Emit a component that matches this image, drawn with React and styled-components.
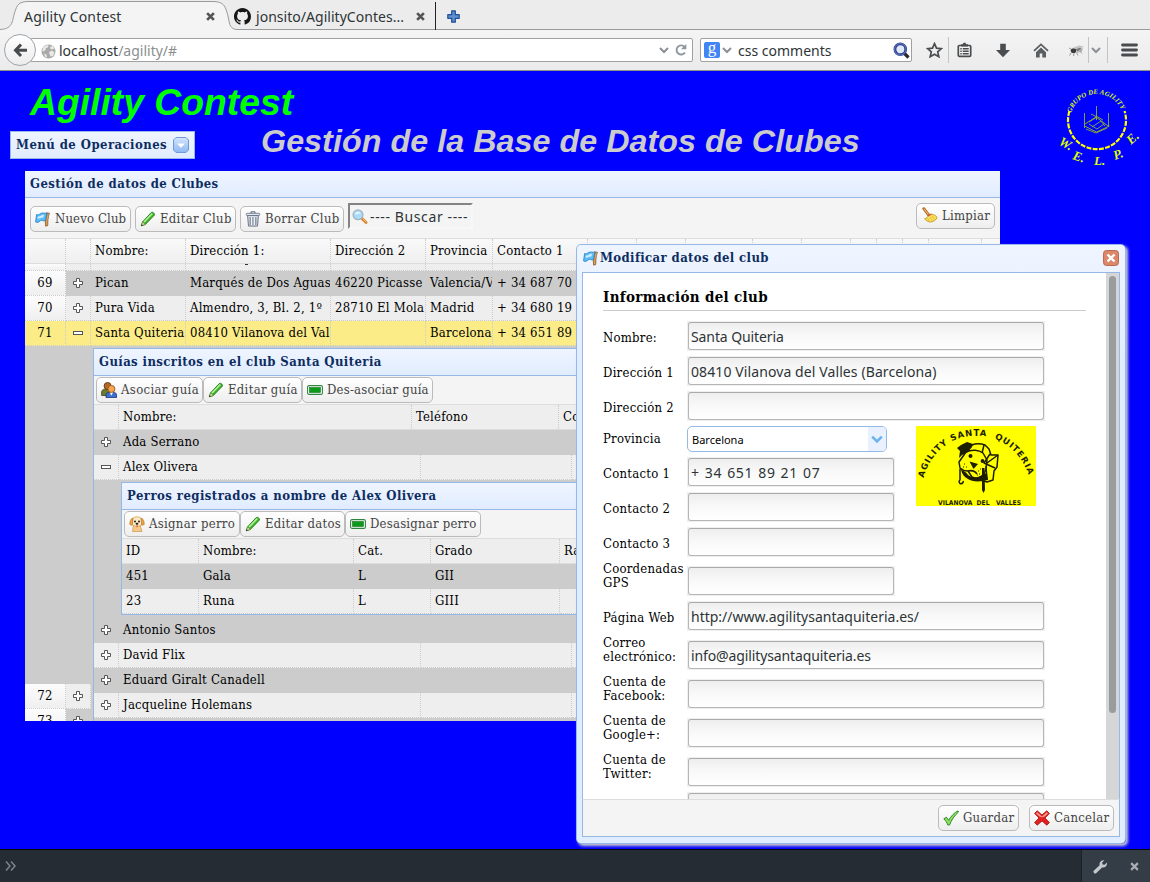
import React from 'react';
import styled, { createGlobalStyle, css } from 'styled-components';

const serif = '"DejaVu Serif Condensed", "DejaVu Serif", serif';
const ui = '"Noto Sans", "Open Sans", sans-serif';
const navy = '#0e2d5f';
const line = '#95b8e7';

const GlobalStyle = createGlobalStyle`
  * { box-sizing: border-box; }
  body { margin: 0; background: #00f; overflow: hidden; }
  svg { display: block; flex: none; }
`;

const Page = styled.div`
  width: 1150px;
  height: 882px;
  display: flex;
  flex-direction: column;
  position: relative;
  overflow: hidden;
  background: #00f;
  font: 13px/16px ${serif};
  letter-spacing: 0.2px;
  color: #000;
`;

/* ---------- browser chrome ---------- */

const TabStrip = styled.div`
  position: relative;
  height: 30px;
  flex: none;
  display: flex;
  align-items: center;
  background: #ececec;
  font: 14px/20px ${ui};
  letter-spacing: 0.1px;
  color: #2e3436;
`;
const TabShape = styled.svg`
  position: absolute;
  left: 0;
  top: 0;
`;
const Tab = styled.div`
  position: relative;
  width: ${p => p.$w}px;
  height: 30px;
  display: flex;
  align-items: center;
  padding: 3px 11px 0 ${p => p.$pad}px;
  gap: 5px;
`;
const TabTitle = styled.span`
  flex: 1;
  white-space: nowrap;
  letter-spacing: ${p => p.$ls || 0}px;
`;
const PlusTab = styled.div`
  position: relative;
  padding: 2px 0 0 11px;
`;
const NavBar = styled.div`
  height: 41px;
  flex: none;
  display: flex;
  align-items: center;
  position: relative;
  background: linear-gradient(#f4f4f4, #ebebeb);
  border-bottom: 1px solid #8f8f8f;
  padding: 0 0 0 4px;
  font: 14px/20px ${ui};
  letter-spacing: 0;
  color: #2e3436;
`;
const BackButton = styled.div`
  width: 32px;
  height: 32px;
  border: 1px solid #9ca4ab;
  border-radius: 50%;
  background: linear-gradient(#fff, #ececec);
  display: flex;
  align-items: center;
  justify-content: center;
  z-index: 1;
`;
const UrlBar = styled.div`
  width: 663px;
  height: 24px;
  margin-left: -6px;
  padding: 2px 4px 0 10px;
  display: flex;
  align-items: center;
  border: 1px solid #a1a1a1;
  border-radius: 2px;
  background: #fff;
`;
const Url = styled.span`
  flex: 1;
  padding-left: 3px;
  line-height: 20px;
  span { color: #8b8e8f; }
`;
const UrlButtons = styled.div`
  display: flex;
  align-items: center;
  gap: 5px;
  margin-top: -3px;
`;
const SearchBox = styled.div`
  width: 212px;
  height: 24px;
  margin: 0 9px 0 7px;
  padding: 0 1px 0 3px;
  display: flex;
  align-items: center;
  border: 1px solid #a1a1a1;
  border-radius: 2px;
  background: #fff;
`;
const SearchText = styled.span`
  flex: 1;
  padding: 2px 0 0 6px;
`;
const GoogleBadge = styled.div`
  width: 16px;
  height: 16px;
  border-radius: 2px;
  background: #4285f4;
  color: #fff;
  font: 17px/11px "Liberation Serif", serif;
  text-align: center;
  margin-right: 2px;
`;
const ToolIcon = styled.div`
  width: ${p => p.$w}px;
  height: ${p => (p.$sep ? 26 : 20)}px;
  display: flex;
  align-items: center;
  justify-content: center;
  padding: 0 ${p => p.$pr || 0}px 0 ${p => p.$pl || 0}px;
  border-left: ${p => (p.$sep ? '1px solid #c0c4c8' : 'none')};
`;

/* ---------- page heading ---------- */

const Heading = styled.header`
  height: 100px;
  flex: none;
  display: flex;
  padding: 0 2px 0 10px;
`;
const HeadLeft = styled.div`
  width: 1048px;
  display: flex;
  flex-direction: column;
`;
const Brand = styled.h1`
  margin: 11px 0 0 20px;
  font: italic bold 37.3px/40px "Liberation Sans", sans-serif;
  letter-spacing: 0;
  color: #0f0;
`;
const SubRow = styled.div`
  display: flex;
  align-items: flex-start;
`;
const SubTitle = styled.h2`
  margin: 1px 0 0 66px;
  font: italic bold 32.26px/36px "Liberation Sans", sans-serif;
  letter-spacing: 0.05px;
  color: #ccc;
  white-space: nowrap;
`;
const MenuButton = styled.div`
  width: 185px;
  height: 28px;
  margin-top: 9px;
  padding: 0 5px;
  display: flex;
  align-items: center;
  justify-content: space-between;
  border: 1px solid ${line};
  background: linear-gradient(#eff5ff, #e0ecff);
  font-weight: bold;
  letter-spacing: 0.45px;
  color: ${navy};
  white-space: nowrap;
`;

/* ---------- panels and grids ---------- */

const Panel = styled.section`
  display: flex;
  flex-direction: column;
  ${p => p.$nested && css`border: 1px solid ${line};`}
`;
const MainPanel = styled(Panel)`
  width: 975px;
  height: 550px;
  margin-left: 25px;
  flex: none;
  overflow: hidden;
  background: #fff;
`;
const PanelTitle = styled.div`
  height: 27px;
  flex: none;
  padding: 5px 5px 0;
  font-weight: bold;
  letter-spacing: ${p => p.$ls || 0.42}px;
  color: ${navy};
  white-space: nowrap;
  background: linear-gradient(#eff5ff, #e0ecff);
  border-bottom: 1px solid ${line};
`;
const ToolBar = styled.div`
  height: ${p => (p.$big ? 41 : 29)}px;
  flex: none;
  display: flex;
  align-items: center;
  gap: ${p => (p.$big ? 4 : 0)}px;
  padding: ${p => (p.$big ? '2px 5px 0' : '0 2px')};
  background: #f4f4f4;
  border-bottom: 1px solid #ddd;
`;
const Button = styled.div`
  width: ${p => p.$w}px;
  height: 26px;
  flex: none;
  display: flex;
  align-items: center;
  gap: 4px;
  margin-top: ${p => p.$lift || 0}px;
  padding: 0 0 1px 4px;
  border: 1px solid #bbb;
  border-radius: 5px;
  background: linear-gradient(#fff, #eee);
  color: #444;
  white-space: nowrap;
  letter-spacing: ${p => (p.$ls === undefined ? 0.25 : p.$ls)}px;
`;
const Spacer = styled.div`flex: 1;`;
const SearchInput = styled.div`
  width: 125px;
  height: 26px;
  margin-top: -6px;
  padding: 2px 0 0 2px;
  display: flex;
  align-items: center;
  gap: 2px;
  border: 2px solid;
  border-color: #848484 #f8f8f8 #f8f8f8 #848484;
  font: 14px/20px ${ui};
  letter-spacing: 0.62px;
  color: #2e3436;
  white-space: nowrap;
`;
const Row = styled.div`
  height: 25px;
  flex: none;
  display: flex;
  background: ${p => (p.$selected ? '#fbec88' : p.$alt ? '#ccc' : '#eee')};
`;
const HeadRow = styled(Row)`
  background: ${p => (p.$plain ? '#eee' : 'linear-gradient(#f9f9f9, #efefef)')};
  border-bottom: 1px solid #ddd;
`;
const Cell = styled.div`
  width: ${p => p.$w}px;
  flex: none;
  padding: 4px 0 0 ${p => (p.$center ? 0 : 4)}px;
  border-right: 1px dotted #ccc;
  border-bottom: ${p => (p.$head ? 'none' : '1px dotted #ccc')};
  white-space: nowrap;
  overflow: hidden;
  ${p => p.$center && css`
    display: flex;
    justify-content: center;
  `}
  ${p => p.$num && css`background: linear-gradient(#fcfcfc, #efefef);`}
`;
const GridBody = styled.div`
  flex: 1;
  overflow: hidden;
  display: flex;
  flex-direction: column;
  background: #ccc;
`;
const SliverRow = styled(Row)`
  height: 7px;
  overflow: hidden;
`;
const Descender = styled.div`
  width: 3px;
  height: 1px;
  margin: -4px 0 0 55px;
  background: #333;
`;
const SplitView = styled.div`
  flex: none;
  display: flex;
`;
const LockedPane = styled.div`
  width: 66px;
  padding-top: 338px;
`;
const DetailPane = styled.div`
  padding: 2px 0 0 2px;
`;
const SubDetail = styled.div`
  padding: 2px 0 3px 27px;
  background: #ccc;
`;
const NestedPanel = styled(Panel)`
  width: ${p => p.$w}px;
`;

/* ---------- dialog ---------- */

const Dialog = styled.div`
  position: absolute;
  left: 576px;
  top: 244px;
  width: 550px;
  height: 600px;
  display: flex;
  flex-direction: column;
  padding: 0 6px 6px;
  border: 1px solid ${line};
  border-radius: 5px;
  background: linear-gradient(#eff5ff, #e0ecff 20%);
  box-shadow: 2px 2px 3px #ccc;
`;
const DialogTitle = styled.div`
  height: 27px;
  flex: none;
  display: flex;
  align-items: center;
  gap: 1px;
  font-weight: bold;
  letter-spacing: 0.38px;
  color: ${navy};
  padding: 0 0 1px;
`;
const DialogBody = styled.div`
  height: 527px;
  flex: none;
  display: flex;
  border: 1px solid ${line};
  border-bottom: none;
  background: #fff;
  margin: 0 -1px;
`;
const FormArea = styled.div`
  flex: 1;
  height: 526px;
  overflow: hidden;
  padding: 16px 20px 0;
`;
const ScrollTrack = styled.div`
  width: 13px;
  padding: 3px 3px 0;
  background: #d6d6d6;
`;
const ScrollThumb = styled.div`
  height: 437px;
  border-radius: 4px;
  background: #999c9d;
`;
const FormTitle = styled.div`
  height: 22px;
  margin-bottom: 10px;
  border-bottom: 1px solid #ccc;
  font-size: 15px;
  line-height: 17px;
  font-weight: bold;
  letter-spacing: 0.33px;
`;
const Field = styled.div`
  min-height: ${p => (p.$combo ? 26 : 30)}px;
  display: flex;
  align-items: flex-end;
  margin-bottom: 5px;
  ${p => p.$two && css`height: 34px;`}
`;
const Label = styled.label`
  width: 84px;
  flex: none;
  line-height: 14px;
  padding-bottom: 6px;
  letter-spacing: 0.25px;
  white-space: nowrap;
`;
const InputFrame = styled.div`
  width: ${p => p.$w}px;
  height: 30px;
  flex: none;
  padding: 1px;
  background: #efefef;
`;
const Input = styled.div`
  height: 28px;
  padding: 4px 0 0 2px;
  border: 1px solid #b6b6b6;
  border-top-color: #aaa;
  border-radius: 3px;
  background: linear-gradient(#eee, #f8f8f8 45%, #fff);
  font: 14px/20px ${ui};
  letter-spacing: ${p => p.$ls || 0}px;
  word-spacing: ${p => p.$ws || 0}px;
  color: #2e3436;
  white-space: pre;
`;
const Combo = styled.div`
  width: 200px;
  height: 26px;
  display: flex;
  border: 1px solid ${line};
  border-radius: 5px;
  overflow: hidden;
  background: #fff;
  font: 11px/25px ${ui};
  letter-spacing: 0;
  padding-left: 4px;
`;
const ComboArrow = styled.div`
  width: 18px;
  margin-left: auto;
  display: flex;
  align-items: center;
  justify-content: center;
  background: #e9f1ff;
`;
const LogoRow = styled.div`
  display: flex;
  gap: 21px;
`;
const DialogFooter = styled.div`
  height: 38px;
  flex: none;
  margin: 0 -1px;
  display: flex;
  align-items: center;
  justify-content: flex-end;
  gap: 10px;
  padding: 0 5px 0 0;
  border: 1px solid ${line};
  border-top-color: #ddd;
  background: #f4f4f4;
`;

/* ---------- developer bar ---------- */

const BlueGap = styled.div`flex: 1;`;
const DevBar = styled.footer`
  height: 33px;
  flex: none;
  display: flex;
  align-items: center;
  justify-content: space-between;
  border-top: 1px solid #06080a;
  background: #252c33;
  padding-left: 5px;
`;
const DevTools = styled.div`
  width: 69px;
  height: 32px;
  display: flex;
  align-items: center;
  gap: 22px;
  padding-left: 11px;
  border-left: 1px solid #1a2026;
  background: #343c45;
`;

/* ---------- icons ---------- */

const Cross = ({ size = 8, color = '#555', w = 2.4 }) => (
  <svg width={size} height={size} viewBox="0 0 8 8">
    <path d="M1 1l6 6M7 1L1 7" stroke={color} strokeWidth={w} />
  </svg>
);
const Chevron = ({ color = '#8c9094', s = 10, w = 2 }) => (
  <svg width={s} height={s} viewBox="0 0 10 10">
    <path d="M1 3l4 4 4-4" fill="none" stroke={color} strokeWidth={w} />
  </svg>
);
const ExpanderSvg = styled.svg`
  margin-top: 2px;
`;
const Expander = ({ open }) => (
  <ExpanderSvg width="12" height="12" viewBox="0 0 12 12">
    {open
      ? <rect x="1.5" y="4.5" width="9" height="3" fill="#fff" stroke="#555" />
      : <path d="M4.5 1.5h3v3h3v3h-3v3h-3v-3h-3v-3h3z" fill="#fff" stroke="#555" />}
  </ExpanderSvg>
);
const FlagIcon = () => (
  <svg width="16" height="16" viewBox="0 0 16 16">
    <path d="M11.300 1.800l3.200.4c-.8 2-1.300 4.200-1.500 6.600l-.2 5.800-2.200.6-.4-5.200z" fill="#b5762c" stroke="#7a4a15" strokeWidth=".6" />
    <path d="M13.300 2.600l-1.400 6.400-.2 5.200" stroke="#e8b46a" strokeWidth=".9" fill="none" />
    <path d="M1.600 3.600C3.600 5 5.600 1.500 8.200 2c1.500.3 2.500.4 3.700 0L10.400 9.600c-2 .8-3.500-.9-5.200.2C3.800 11.200 2 12 .6 11z" fill="#5dbdf7" stroke="#2a86cf" strokeWidth=".9" />
    <path d="M3 5.500c2 .6 3.500-2.200 6-1.800L8.300 6.500c-2-.3-3.500 1.200-5.800 1.300z" fill="#d3efff" />
  </svg>
);
const PencilIcon = () => (
  <svg width="16" height="16" viewBox="0 0 16 16">
    <path d="M1.300 14.800l1.300-4L11.300 1.500c1.300-1 3.900 1.200 2.900 2.800L5.300 13.500z" fill="#3fb52c" stroke="#1f7a18" strokeWidth=".9" />
    <path d="M4 11L12.300 2.500" stroke="#b8f29b" strokeWidth="1.600" />
    <path d="M1.300 14.800l1.300-4 2.700 2.700z" fill="#f0d9a8" stroke="#3c6d2b" strokeWidth=".5" />
    <path d="M1.200 14.900l.5-1.700 1.200 1.100z" fill="#222" />
  </svg>
);
const TrashIcon = () => (
  <svg width="16" height="16" viewBox="0 0 16 16">
    <path d="M2.600 4.500h10.800l-.9 10.600H3.500z" fill="#d8dee6" stroke="#5d6a7c" strokeWidth=".9" />
    <path d="M5.200 6v8M8 6v8M10.800 6v8" stroke="#7c899b" strokeWidth="1.200" />
    <path d="M6.500 6v8M9.300 6v8" stroke="#f6f8fa" strokeWidth=".8" />
    <rect x="1.300" y="2.300" width="13.400" height="2.200" rx=".8" fill="#e4e9ef" stroke="#5d6a7c" strokeWidth=".8" />
    <path d="M6 2.200V.8h4v1.400" fill="none" stroke="#5d6a7c" />
  </svg>
);
const LensIcon = () => (
  <svg width="16" height="16" viewBox="0 0 16 16">
    <path d="M10 9.600l4 4" stroke="#d9822b" strokeWidth="2.800" strokeLinecap="round" />
    <path d="M10.500 9.600l3.400 3.400" stroke="#ffc46b" strokeWidth="1" />
    <circle cx="6" cy="5.800" r="4.900" fill="#a9dbfb" stroke="#a7b1bb" strokeWidth="1.300" />
    <path d="M3 5.500a3 3 0 0 1 5.500-1.200C7 5 5 5 3 5.500z" fill="#eaf8ff" />
  </svg>
);
const BroomIcon = () => (
  <svg width="17" height="17" viewBox="0 0 18 18">
    <path d="M3 1.800l5 6.500" stroke="#a8641d" strokeWidth="3" strokeLinecap="round" />
    <path d="M3 1.800l4.700 6" stroke="#f1b45e" strokeWidth="1.300" />
    <path d="M8.500 7.800c3-.8 7 .4 8.500 3.200-.4 2.600-3.700 4.700-7.500 5C7 15.500 5 13.800 3.800 12.600 6 12 7.500 10.500 8.500 7.800z" fill="#fbe05e" stroke="#b88a14" strokeWidth=".8" />
    <path d="M7 11.800l1.800 3.400M9.500 10.500l2.700 4M11.500 9.300l3 3.500" stroke="#d0a52a" strokeWidth=".7" />
    <path d="M7.200 9.600l3.700-2" stroke="#d64a3a" strokeWidth="1.300" />
  </svg>
);
const PeopleIcon = () => (
  <svg width="16" height="16" viewBox="0 0 16 16">
    <path d="M.6 13.500V10c0-2 2-2.800 4-2.800h3.500v6.300z" fill="#6b7a2c" stroke="#3c461a" strokeWidth=".8" />
    <circle cx="6.600" cy="4" r="3.500" fill="#b06a2a" stroke="#5d3411" strokeWidth=".9" />
    <path d="M5 15.600V13c0-2 2-2.800 4-2.800h3c2 0 3.500 1 3.500 3v2.400z" fill="#3b6fd0" stroke="#27397c" strokeWidth=".9" />
    <path d="M8.800 10.300l1.600 3.400 1.700-3.400z" fill="#fff" />
    <circle cx="10.400" cy="6.900" r="3.500" fill="#f6a650" stroke="#a3561a" strokeWidth=".9" />
  </svg>
);
const UnlinkIcon = () => (
  <svg width="16" height="16" viewBox="0 0 16 16">
    <rect x=".6" y="3.600" width="14.800" height="8.800" rx="1.500" fill="#fff" stroke="#2e8540" strokeWidth="1.100" />
    <rect x="2.600" y="5.600" width="10.800" height="4.800" fill="#0c9a1a" stroke="#0a6b12" strokeWidth=".6" />
  </svg>
);
const DogIcon = () => (
  <svg width="16" height="16" viewBox="0 0 16 16">
    <path d="M4.500 9h6.500l2 6.500H3.500z" fill="#f6c98b" stroke="#c98a3c" strokeWidth=".6" />
    <path d="M3.800 2.500C5.500.3 10.500.3 12.200 2.500L13 8c-1.500 3-8.500 3-10 0z" fill="#fde9c6" stroke="#d49a4e" strokeWidth=".7" />
    <path d="M4 2C1.800 2.500.6 5.500.8 8.500l2.400.8zM12 2c2.200.5 3.400 3.500 3.200 6.500l-2.400.8z" fill="#eca24a" stroke="#b9711f" strokeWidth=".6" />
    <circle cx="6" cy="5.500" r="1" fill="#222" /><circle cx="10" cy="5.500" r="1" fill="#222" />
    <ellipse cx="8" cy="7.800" rx="1.400" ry="1" fill="#1c1c1c" />
    <path d="M7 9.600h2l-1 2.200z" fill="#d9532c" />
  </svg>
);
const CheckIcon = () => (
  <svg width="16" height="16" viewBox="0 0 16 16">
    <path d="M.8 8.800l2.600-1.600 2.300 3.200C8 6 11.500 2.500 15 .9l.4 1.200C11.500 5.500 8.500 9.800 6.500 15H4.800C4 12.600 2.600 10.500.8 8.800z" fill="#8fe05e" stroke="#2c8a2a" strokeWidth="1" />
  </svg>
);
const CancelIcon = () => (
  <svg width="16" height="16" viewBox="0 0 16 16">
    <path d="M3.200.8L8 5 12.800.8l2.600 2.600L11 8l4.400 4.600-2.600 2.600L8 11l-4.800 4.200-2.600-2.600L5 8 .6 3.400z" fill="#e3211c" stroke="#a30f0f" strokeWidth=".8" strokeLinejoin="round" />
    <path d="M3.200 2.200L8 6.500l4.800-4.300 1.200 1.200-3.800 3.300c-1.400.6-3 .6-4.400 0L2 3.400z" fill="#ff9a94" />
  </svg>
);
const GithubIcon = () => (
  <svg width="17" height="17" viewBox="0 0 16 16">
    <path fill="#161616" fillRule="evenodd" d="M8 0C3.580 0 0 3.580 0 8c0 3.540 2.290 6.530 5.470 7.590.4.070.55-.17.55-.38 0-.19-.01-.82-.01-1.490-2.010.37-2.530-.49-2.690-.94-.09-.23-.48-.94-.82-1.130-.28-.15-.68-.52-.01-.53.63-.01 1.080.58 1.230.82.72 1.210 1.870.87 2.330.66.070-.52.28-.87.51-1.070-1.780-.2-3.640-.89-3.640-3.950 0-.87.31-1.590.82-2.150-.08-.2-.36-1.020.08-2.120 0 0 .67-.21 2.200.82.64-.18 1.320-.27 2-.27s1.360.09 2 .27c1.530-1.040 2.200-.82 2.200-.82.44 1.100.16 1.920.08 2.120.51.56.82 1.270.82 2.150 0 3.070-1.870 3.750-3.650 3.950.29.25.54.73.54 1.480 0 1.070-.01 1.930-.01 2.200 0 .21.15.46.55.38A8.010 8.010 0 0 0 16 8c0-4.420-3.580-8-8-8z" />
  </svg>
);
const GlobeIcon = () => (
  <svg width="15" height="15" viewBox="0 0 15 15">
    <circle cx="7.500" cy="7.500" r="7" fill="#a9a9a9" />
    <path d="M2 3.500C4 1.500 6 1 7.500 1.500L7 3.500 5 4 4.500 6 2.500 7.500 1.300 7zM9 3l2.500-1 2 2.500-2.300 1L9.500 5zM8 8l3-1.500 2.500 2-1.500 3.500-2.500.5L8.500 10zM3 9.500l2.500 1 .5 3-2-.8z" fill="#e8e8e8" />
  </svg>
);
const BackArrow = () => (
  <svg width="15" height="15" viewBox="0 0 15 15">
    <path d="M8 1.500L2.500 7.300 8 13M3 7.300h11" fill="none" stroke="#474b4d" strokeWidth="3" />
  </svg>
);
const ReloadIcon = () => (
  <svg width="14" height="14" viewBox="0 0 14 14">
    <path d="M10.500 3.800A4.600 4.600 0 1 0 11 9.500" fill="none" stroke="#8e979e" strokeWidth="1.900" />
    <path d="M12.300 1v5.200H7z" fill="#8e979e" />
  </svg>
);
const BigLens = () => (
  <svg width="17" height="17" viewBox="0 0 17 17">
    <path d="M11 11l4.500 4.500" stroke="#2b2b2b" strokeWidth="3.200" />
    <circle cx="7.300" cy="7.300" r="5.400" fill="#dfe9f8" stroke="#2d3f8f" strokeWidth="2.800" />
    <circle cx="7.300" cy="7.300" r="5.700" fill="none" stroke="#7f95d2" strokeWidth=".7" />
  </svg>
);
const StarIcon = () => (
  <svg width="17" height="16" viewBox="0 0 17 16">
    <path d="M8.500 1.600l2 4.500 4.900.5-3.700 3.300 1.100 4.800-4.300-2.500-4.300 2.500 1.100-4.800L1.600 6.600l4.900-.5z" fill="none" stroke="#4a4d50" strokeWidth="1.700" strokeLinejoin="miter" />
  </svg>
);
const ClipIcon = () => (
  <svg width="15" height="16" viewBox="0 0 15 16">
    <rect x="1.300" y="3.500" width="12.400" height="10.800" rx="1" fill="#f4f4f4" stroke="#4a4d50" strokeWidth="1.700" />
    <path d="M4 4.500V2.200h1.800L6.500.8h2l.7 1.400H11v2.300z" fill="#4a4d50" />
    <path d="M3.300 6.700h1.400M5.700 6.700h6M3.300 9.200h1.400M5.700 9.200h6M3.300 11.700h1.400M5.700 11.700h6" stroke="#4a4d50" strokeWidth="1.400" />
  </svg>
);
const DownIcon = () => (
  <svg width="14" height="15" viewBox="0 0 14 15"><path d="M4.200.7h5.600v6.300H14l-7 7.300-7-7.300h4.200z" fill="#4a4d50" /></svg>
);
const HomeIcon = () => (
  <svg width="16" height="15" viewBox="0 0 16 15">
    <path d="M1 7.800l7-6.500 7 6.500" fill="none" stroke="#5b5e60" strokeWidth="1.700" />
    <path d="M3 9.300l5-4.700 5 4.700v5.200H9.300v-4H6.700v4H3z" fill="#5b5e60" />
  </svg>
);
const BugIcon = () => (
  <svg width="17" height="13" viewBox="0 0 17 13">
    <path d="M3 4.500l8-3 5 1-7 4z" fill="#c4c4c4" />
    <path d="M9 6l6-2-1 3.500-5 1.500z" fill="#b5b5b5" />
    <ellipse cx="5.500" cy="6.800" rx="2.800" ry="2.300" fill="#3b3b3b" />
    <path d="M8 5.200l4-1.500 1.500 1.300-4.500 2.200z" fill="#777" />
    <path d="M3 9l-1.500 2.500M6 9l-.5 3M8.500 8.500l1.500 3M3 5L1 4M12 7l2 2.500" stroke="#8a8a8a" strokeWidth=".8" />
  </svg>
);
const MenuLines = () => (
  <svg width="17" height="14" viewBox="0 0 17 14"><path d="M1.500 2h14M1.500 7h14M1.500 12h14" stroke="#474b4d" strokeWidth="2.800" strokeLinecap="round" /></svg>
);
const PlusIcon = () => (
  <svg width="13" height="13" viewBox="0 0 13 13">
    <path d="M4.700.8h3.600v3.900h3.900v3.600H8.300v3.900H4.700V8.300H.8V4.700h3.900z" fill="#5f8fce" stroke="#1f4f96" strokeWidth="1.200" strokeLinejoin="round" />
  </svg>
);
const DropBadge = () => (
  <svg width="16" height="16" viewBox="0 0 16 16">
    <defs><linearGradient id="db" x1="0" y1="0" x2="0" y2="1"><stop offset="0" stopColor="#d4e5fd" /><stop offset="1" stopColor="#8db7ef" /></linearGradient></defs>
    <path d="M3 .5h10L15.500 3v10L13 15.500H3L.5 13V3z" fill="url(#db)" stroke="#6f9bd8" />
    <path d="M4 6.500h8l-4 4.300z" fill="#fff" />
  </svg>
);
const CloseBadge = () => (
  <svg width="16" height="16" viewBox="0 0 16 16">
    <rect x=".5" y=".5" width="15" height="15" rx="3" fill="#dc8769" stroke="#b96b50" />
    <path d="M4.500 4.500l7 7M11.500 4.500l-7 7" stroke="#fff" strokeWidth="2.400" />
  </svg>
);
const WrenchIcon = () => (
  <svg width="15" height="15" viewBox="0 0 15 15">
    <path d="M1 14a1.700 1.700 0 0 1 0-2.400L6.600 6.300C6 3.500 8 .7 11.300 1.200L9.200 3.400l.3 2 2.100.3 2.300-2.200c.6 3.300-2 5.500-4.800 4.900L3.400 14A1.700 1.700 0 0 1 1 14z" fill="#c3c8cc" />
  </svg>
);
const DoubleChevron = () => (
  <svg width="11" height="12" viewBox="0 0 11 12"><path d="M1 1.500L5 6l-4 4.500M6 1.500L10 6l-4 4.500" fill="none" stroke="#7d868e" strokeWidth="1.500" /></svg>
);

const EmblemSvg = styled.svg`
  margin-top: 13px;
`;
const ClubEmblem = () => (
  <EmblemSvg width="90" height="86" viewBox="0 0 90 86">
    <defs><path id="welpeArc" d="M12 37A27 27 0 1 1 66 37" /></defs>
    <g fill="#df0" fontFamily="Liberation Serif, serif" fontStyle="italic" fontWeight="bold">
      <text fontSize="6.800" letterSpacing="0.1"><textPath href="#welpeArc" startOffset="8">GRUPO DE AGILITY</textPath></text>
      <text fontSize="13" letterSpacing="0" transform="translate(0 60) rotate(30)">W.</text>
      <text fontSize="13" letterSpacing="0" transform="translate(14 75) rotate(18)">E.</text>
      <text fontSize="13" letterSpacing="0" transform="translate(36 81)">L.</text>
      <text fontSize="13" letterSpacing="0" transform="translate(57 76) rotate(-20)">P.</text>
      <text fontSize="13" letterSpacing="0" transform="translate(73 61) rotate(-42)">E.</text>
    </g>
    <path d="M11.500 27A29 29 0 1 0 66.500 27" fill="none" stroke="#ff0" strokeWidth="2.200" strokeDasharray="5 1.300" />
    <path transform="translate(0 1)" d="M26.500 28v15M38.500 21v14M50.500 28v14M26.500 41l12 6 13-6M27 39l11-7 12 9M28 44l10 4 11-5M31 37l8-5-6-3M34 42l9-6 4 5M38 31l7 4M31 39l8 5 7-5" fill="none" stroke="#8fb52a" strokeWidth=".9" />
  </EmblemSvg>
);
const DogLogo = () => (
  <svg width="120" height="80" viewBox="0 0 120 80">
    <rect width="120" height="80" fill="#ff0" />
    <defs><path id="clubArc" d="M7.500 52C14 27 35 9.500 60 9.500S106 26 113 51" /></defs>
    <g fill="#1d1d00" fontFamily="DejaVu Sans, sans-serif" fontWeight="bold">
      <text fontSize="8.500" textLength="143" letterSpacing="0"><textPath href="#clubArc" textLength="143" lengthAdjust="spacing">AGILITY SANTA&#160; QUITERIA</textPath></text>
      <text x="22" y="78.500" fontSize="6.500" letterSpacing="0" textLength="83" lengthAdjust="spacingAndGlyphs">VILANOVA&#160; DEL&#160;&#160; VALLES</text>
    </g>
    <g fill="none" stroke="#1d1d00" strokeWidth="1.500" strokeLinejoin="round">
      <path d="M56 19c5-2 10-1 13 0l4 4 2 6 7 0-1 12-3 4-1 9-6 2-6-2" />
      <path d="M68 19l-2 8M74 28l-6 9 11 5M82 29l-11 8M70 40l1 14" />
      <path d="M50 26c6-3 13-2 17 1l4 7-1 9-2 5c-3 4-8 5-12 3l-4-6c-3 0-6-1-8-3l-1-6z" />
      <path d="M52 45c4-1 7 0 9 3" />
      <path d="M44 43v11a2 2 0 1 0 3 1" />
    </g>
    <path d="M41 22l4-3 6-3 6 2-1 3-4 5-6 3-3 3 1-7zM45 44c3 1 5 2 7 5 5 4 12 3 16-2l3 1 1 6c-8 2-16 2-20-1-4-2-6-5-7-9zM66 42h2.500l.5 22-1.500 3-1.500-3z" fill="#1d1d00" />
    <circle cx="54.500" cy="30" r="2" fill="#1d1d00" /><circle cx="66.500" cy="35" r="1.900" fill="#1d1d00" />
    <path d="M53.500 35.500l8.500 2.500-4.500 5z" fill="#1d1d00" />
    <path d="M48 38h1M50 41h1M47 41h1M62 45h1M64 43h1M63 48h1M61 49h1" stroke="#1d1d00" />
  </svg>
);

/* ---------- data ---------- */

const columns = [
  ['Nombre:', 95], ['Dirección 1:', 145], ['Dirección 2', 95], ['Provincia', 67], ['Contacto 1', 95],
  ['', 49], ['', 49], ['', 67], ['', 49], ['', 49], ['', 26], ['', 26], ['', 26], ['', 53],
];
const clubs = [
  { n: 69, alt: true, v: ['Pican', 'Marqués de Dos Aguas', '46220 Picasse', 'Valencia/V', '+ 34 687 70'] },
  { n: 70, v: ['Pura Vida', 'Almendro, 3, Bl. 2, 1º', '28710 El Mola', 'Madrid', '+ 34 680 19'] },
  { n: 71, selected: true, v: ['Santa Quiteria', '08410 Vilanova del Val', '', 'Barcelona', '+ 34 651 89'] },
];
const guideHead = [['Nombre:', 293], ['Teléfono', 147], ['Correo', 200]];
const guideCols = [302, 151, 200];
const dogCols = [77, 155, 77, 129, 200];

const NumCells = ({ n, open, num = true }) => (
  <>
    <Cell $w={41} $center $num={num}>{n}</Cell>
    <Cell $w={25} $center>{n ? <Expander open={open} /> : null}</Cell>
  </>
);
const GuideRow = ({ name, alt, open }) => (
  <Row $alt={alt}>
    <Cell $w={25} $center><Expander open={open} /></Cell>
    {guideCols.map((w, i) => <Cell key={i} $w={w}>{i === 0 ? name : ''}</Cell>)}
  </Row>
);
const DogRow = ({ cells, alt }) => (
  <Row $alt={alt}>{dogCols.map((w, i) => <Cell key={i} $w={w}>{cells[i]}</Cell>)}</Row>
);
const TextField = ({ label, second, value, w = 358, ls, ws }) => (
  <Field $two={!!second}>
    <Label>{label}{second && <><br />{second}</>}</Label>
    <InputFrame $w={w}><Input $ls={ls} $ws={ws}>{value}</Input></InputFrame>
  </Field>
);

export default function App() {
  return (
    <Page>
      <GlobalStyle />
      <TabStrip>
        <TabShape width="1150" height="30" viewBox="0 0 1150 30">
          <path d="M0 30v-.5c14-.5 12-10 15-18C17 5 19 2 27 1.500h187c9 .5 11 4 13 11 3 9 1 16.500 14 17V30z" fill="#f4f4f4" />
          <path d="M0 29.500c14-.5 12-10 15-18C17 5 19 2 27 1.500h187c9 .5 11 4 13 11 3 9 1 16.500 10 17H1150" fill="none" stroke="#9a9a9a" />
          <path d="M435.500 2v28" stroke="#222" />
        </TabShape>
        <Tab $w={226} $pad={24}><TabTitle $ls={0.18}>Agility Contest</TabTitle><Cross size={9} /></Tab>
        <Tab $w={210} $pad={8}><GithubIcon /><TabTitle $ls={0.03}>jonsito/AgilityContes...</TabTitle><Cross size={9} /></Tab>
        <PlusTab><PlusIcon /></PlusTab>
      </TabStrip>
      <NavBar>
        <BackButton><BackArrow /></BackButton>
        <UrlBar>
          <GlobeIcon />
          <Url>localhost<span>/agility/#</span></Url>
          <UrlButtons><Chevron /><ReloadIcon /></UrlButtons>
        </UrlBar>
        <SearchBox>
          <GoogleBadge>g</GoogleBadge>
          <Chevron />
          <SearchText>css comments</SearchText>
          <BigLens />
        </SearchBox>
        <ToolIcon $w={27}><StarIcon /></ToolIcon>
        <ToolIcon $w={33} $sep $pr={1}><ClipIcon /></ToolIcon>
        <ToolIcon $w={44}><DownIcon /></ToolIcon>
        <ToolIcon $w={32}><HomeIcon /></ToolIcon>
        <ToolIcon $w={31} $pl={7}><BugIcon /></ToolIcon>
        <ToolIcon $w={19} $sep $pr={5}><Chevron /></ToolIcon>
        <ToolIcon $w={43} $sep><MenuLines /></ToolIcon>
      </NavBar>

      <Heading>
        <HeadLeft>
          <Brand>Agility Contest</Brand>
          <SubRow>
            <MenuButton>Menú de Operaciones<DropBadge /></MenuButton>
            <SubTitle>Gestión de la Base de Datos de Clubes</SubTitle>
          </SubRow>
        </HeadLeft>
        <ClubEmblem />
      </Heading>

      <MainPanel>
        <PanelTitle>Gestión de datos de Clubes</PanelTitle>
        <ToolBar $big>
          <Button $w={101} $ls={0.15}><FlagIcon />Nuevo Club</Button>
          <Button $w={101} $ls={0.3}><PencilIcon />Editar Club</Button>
          <Button $w={104} $ls={0.35}><TrashIcon />Borrar Club</Button>
          <SearchInput><LensIcon />---- Buscar ----</SearchInput>
          <Spacer />
          <Button $w={79} $lift={-6}><BroomIcon />Limpiar</Button>
        </ToolBar>
        <HeadRow>
          <Cell $w={41} $head /><Cell $w={25} $head />
          {columns.map(([t, w], i) => <Cell key={i} $w={w} $head>{t}</Cell>)}
        </HeadRow>
        <GridBody>
          <SliverRow>
            <NumCells />
            {columns.map(([, w], i) => <Cell key={i} $w={w}>{i === 1 && <Descender />}</Cell>)}
          </SliverRow>
          {clubs.map(c => (
            <Row key={c.n} $alt={c.alt} $selected={c.selected}>
              <NumCells n={c.n} open={c.selected} num={!c.selected} />
              {columns.map(([, w], i) => <Cell key={i} $w={w}>{c.v[i]}</Cell>)}
            </Row>
          ))}
          <SplitView>
            <LockedPane>
              <Row><NumCells n={72} /></Row>
              <Row $alt><NumCells n={73} /></Row>
            </LockedPane>
            <DetailPane>
              <NestedPanel $nested $w={905}>
                <PanelTitle $ls={0.4}>Guías inscritos en el club Santa Quiteria</PanelTitle>
                <ToolBar>
                  <Button $w={107} $ls={0.35}><PeopleIcon />Asociar guía</Button>
                  <Button $w={99} $ls={0.3}><PencilIcon />Editar guía</Button>
                  <Button $w={131} $ls={0.2}><UnlinkIcon />Des-asociar guía</Button>
                </ToolBar>
                <HeadRow $plain>
                  <Cell $w={25} $head />
                  {guideHead.map(([t, w], i) => <Cell key={i} $w={w} $head>{t}</Cell>)}
                </HeadRow>
                <GuideRow name="Ada Serrano" alt />
                <GuideRow name="Alex Olivera" open />
                <SubDetail>
                  <NestedPanel $nested $w={872}>
                    <PanelTitle $ls={0.45}>Perros registrados a nombre de Alex Olivera</PanelTitle>
                    <ToolBar>
                      <Button $w={116} $ls={0.3}><DogIcon />Asignar perro</Button>
                      <Button $w={105} $ls={0.25}><PencilIcon />Editar datos</Button>
                      <Button $w={136} $ls={0.22}><UnlinkIcon />Desasignar perro</Button>
                    </ToolBar>
                    <HeadRow $plain>
                      {['ID', 'Nombre:', 'Cat.', 'Grado', 'Raza'].map((t, i) => <Cell key={t} $w={dogCols[i]} $head>{t}</Cell>)}
                    </HeadRow>
                    <DogRow alt cells={['451', 'Gala', 'L', 'GII']} />
                    <DogRow cells={['23', 'Runa', 'L', 'GIII']} />
                  </NestedPanel>
                </SubDetail>
                <GuideRow name="Antonio Santos" alt />
                <GuideRow name="David Flix" />
                <GuideRow name="Eduard Giralt Canadell" alt />
                <GuideRow name="Jacqueline Holemans" />
                <Row $alt />
              </NestedPanel>
            </DetailPane>
          </SplitView>
        </GridBody>
      </MainPanel>

      <BlueGap />

      <DevBar>
        <DoubleChevron />
        <DevTools><WrenchIcon /><Cross size={9} color="#a9afb5" w={1.9} /></DevTools>
      </DevBar>

      <Dialog>
        <DialogTitle><FlagIcon />Modificar datos del club<Spacer /><CloseBadge /></DialogTitle>
        <DialogBody>
          <FormArea>
            <FormTitle>Información del club</FormTitle>
            <TextField label="Nombre:" value="Santa Quiteria" ls={-0.1} />
            <TextField label="Dirección 1" value="08410 Vilanova del Valles (Barcelona)" ls={0.1} />
            <TextField label="Dirección 2" />
            <LogoRow>
              <div>
                <Field $combo>
                  <Label>Provincia</Label>
                  <Combo>Barcelona<ComboArrow><Chevron color="#6bb3ee" s={12} w={2.2} /></ComboArrow></Combo>
                </Field>
                <TextField label="Contacto 1" value="+ 34 651 89 21 07" w={208} ls={0.65} ws={0.8} />
                <TextField label="Contacto 2" w={208} />
                <TextField label="Contacto 3" w={208} />
              </div>
              <DogLogo />
            </LogoRow>
            <TextField label="Coordenadas" second="GPS" w={208} />
            <TextField label="Página Web" value="http://www.agilitysantaquiteria.es/" />
            <TextField label="Correo" second="electrónico:" value="info@agilitysantaquiteria.es" ls={-0.12} />
            <TextField label="Cuenta de" second="Facebook:" />
            <TextField label="Cuenta de" second="Google+:" />
            <TextField label="Cuenta de" second="Twitter:" />
            <TextField label="" />
          </FormArea>
          <ScrollTrack><ScrollThumb /></ScrollTrack>
        </DialogBody>
        <DialogFooter>
          <Button $w={81}><CheckIcon />Guardar</Button>
          <Button $w={85}><CancelIcon />Cancelar</Button>
        </DialogFooter>
      </Dialog>
    </Page>
  );
}
